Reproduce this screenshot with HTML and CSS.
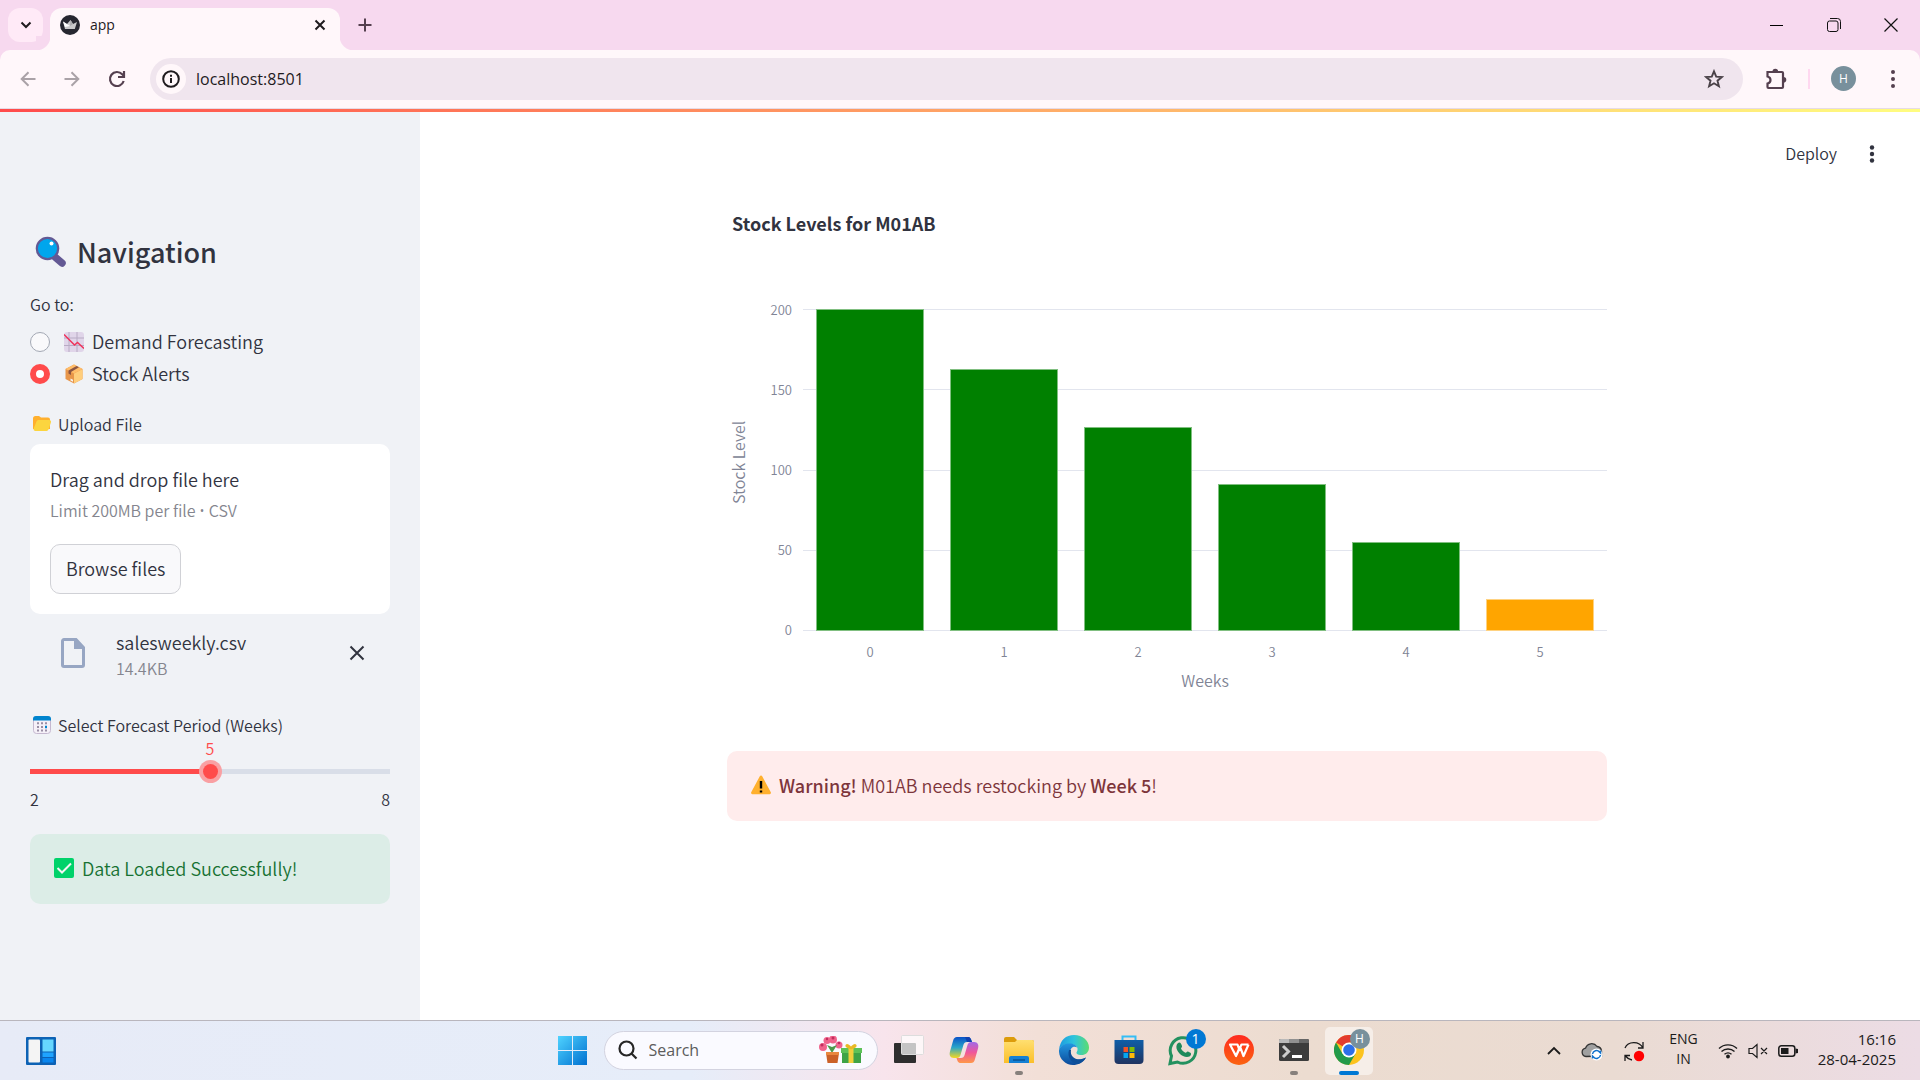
FILE: index.html
```html
<!DOCTYPE html>
<html lang="en">
<head>
<meta charset="utf-8">
<meta name="viewport" content="width=device-width, initial-scale=1">
<title>app</title>
<link rel="stylesheet" href="styles.css">
</head>
<body>
<header class="browser">
  <div class="tab-strip">
    <button class="tab-search" aria-label="Search tabs"><svg width="12" height="8" viewBox="0 0 12 8" fill="none" stroke="#1f1b1e" stroke-width="2"><path d="M1.500 1.500 6 6l4.500-4.500"/></svg></button>
    <div class="tab">
      <svg width="20" height="20" viewBox="0 0 20 20"><circle cx="10" cy="10" r="10" fill="#262730"/><path d="M3 6.500 7 9l3.500-4L13 9l4-2-2.200 7H5z" fill="#c9c9cb"/><path d="M3 6.500 10 11l-5 1z" fill="#fff"/><path d="m10.500 5 2.500 4-3 2z" fill="#a9a9ad"/></svg>
      <span class="tab-title">app</span>
      <button class="plain" aria-label="Close tab"><svg width="12" height="12" viewBox="0 0 12 12" stroke="#1f1b1e" stroke-width="2"><path d="m1.500 1.500 9 9m0-9-9 9"/></svg></button>
    </div>
    <button class="plain new-tab" aria-label="New tab"><svg width="14" height="14" viewBox="0 0 14 14" stroke="#55404f" stroke-width="2"><path d="M7 .5v13M.5 7h13"/></svg></button>
    <div class="window-controls">
      <button class="plain" aria-label="Minimize"><svg width="14" height="14" viewBox="0 0 14 14" stroke="#000"><path d="M0 7.500h13"/></svg></button>
      <button class="plain" aria-label="Restore"><svg width="14" height="14" viewBox="0 0 14 14" fill="none" stroke="#111"><rect x=".5" y="3" width="10.500" height="10.500" rx="2"/><path d="M3 .5h7.500a3 3 0 0 1 3 3V11"/></svg></button>
      <button class="plain" aria-label="Close"><svg width="14" height="14" viewBox="0 0 14 14" stroke="#111" stroke-width="1.200"><path d="m.5.5 13 13m0-13-13 13"/></svg></button>
    </div>
  </div>
  <div class="toolbar">
    <div class="nav-buttons">
      <button class="plain" aria-label="Back"><svg width="16" height="16" viewBox="0 0 16 16" fill="none" stroke="#aaa2a7" stroke-width="2"><path d="M15.500 8H2m6.500-6.800L1.700 8l6.800 6.800"/></svg></button>
      <button class="plain" aria-label="Forward"><svg width="16" height="16" viewBox="0 0 16 16" fill="none" stroke="#aaa2a7" stroke-width="2"><path d="M.5 8H14M7.500 1.200 14.300 8l-6.800 6.800"/></svg></button>
      <button class="plain" aria-label="Reload"><svg width="18" height="18" viewBox="0 0 18 18" fill="none" stroke="#55404f" stroke-width="2.200"><path d="M15.700 11A7 7 0 1 1 14.200 4.300L16 6"/><path d="M16 1v6h-6"/></svg></button>
    </div>
    <div class="address">
      <button class="site-info" aria-label="Site information"><svg width="18" height="18" viewBox="0 0 18 18"><circle cx="9" cy="9" r="7.800" fill="none" stroke="#1f1b1e" stroke-width="2"/><path d="M8 8h2v5H8zM8 4.800h2v2H8z" fill="#1f1b1e"/></svg></button>
      <input class="url" type="text" value="localhost:8501" aria-label="Address">
      <button class="plain" aria-label="Bookmark"><svg width="20" height="20" viewBox="0 0 20 20" fill="none" stroke="#4a4248" stroke-width="1.900"><path d="m10 2.300 2.200 5.300 5.700.4-4.400 3.700 1.400 5.600-4.900-3-4.900 3 1.400-5.600L2.100 8l5.700-.4z"/></svg></button>
    </div>
    <div class="toolbar-end">
      <button class="plain" aria-label="Extensions"><svg width="22" height="22" viewBox="0 0 22 22" fill="none" stroke="#55404f" stroke-width="2.200"><path d="M2.500 4H17a1 1 0 0 1 1 1v14a1 1 0 0 1-1 1H3.500a1 1 0 0 1-1-1v-3.500c4-1 4-6 0-7z"/><path d="M7.500 3.500a2.800 2.800 0 0 1 5.600 0M18.500 9a2.800 2.800 0 0 1 0 5.600" fill="#55404f" stroke="none"/></svg></button>
      <span class="divider"></span>
      <button class="avatar" aria-label="Profile">H</button>
      <button class="plain" aria-label="Menu"><svg width="6" height="20" viewBox="0 0 6 20" fill="#55404f"><circle cx="3" cy="3" r="2"/><circle cx="3" cy="10" r="2"/><circle cx="3" cy="17" r="2"/></svg></button>
    </div>
  </div>
</header>

<div class="app">
  <aside class="sidebar">
    <h2 class="heading"><svg width="32" height="32" viewBox="0 0 32 32"><path d="m21 21 7 6" stroke="#635994" stroke-width="7.500" stroke-linecap="round"/><circle cx="13.500" cy="12.500" r="10.700" fill="#00a6ed" stroke="#635994" stroke-width="2.200"/><circle cx="17.500" cy="7.500" r="2" fill="#fff"/></svg>Navigation</h2>
    <fieldset class="radios">
      <legend class="label">Go to:</legend>
      <label class="radio"><input type="radio" name="page"><svg width="20" height="20" viewBox="0 0 20 20"><rect width="20" height="20" rx="3" fill="#e0d5e9"/><path d="M5 0v20M13 0v20M0 6h20M0 13.500h20" stroke="#b8abc4"/><path d="m0 2.500 10.500 10.500 3-2.500L20 16.500" fill="none" stroke="#f0325a" stroke-width="1.500"/></svg><span class="option">Demand Forecasting</span></label>
      <label class="radio"><input type="radio" name="page" checked><svg width="20" height="20" viewBox="0 0 20 20"><path d="m10 .5 8.500 4.500v10L10 19.500 1.500 15V5z" fill="#e8964a"/><path d="m10 9.500 8.500-4.500v10L10 19.500z" fill="#ffce7c"/><path d="m10 .5 8.500 4.500L10 9.500 1.500 5z" fill="#ffbd69"/><path d="M4.500 6.600 12.500 2l2.500 1.300-8 4.600v3L4.500 9.600z" fill="#8c5543"/><path d="m6.500 14.500 2.500 1.200v2l-2.500-1.200z" fill="#f4f4f4"/></svg><span class="option">Stock Alerts</span></label>
    </fieldset>
    <div class="label upload-label"><svg width="24" height="18" viewBox="0 0 24 18"><path d="M3 3.500A2.500 2.500 0 0 1 5.500 1H9l2 1.500h7a2 2 0 0 1 2 2V14H3z" fill="#ffb02e"/><path d="M6.500 6.500A2 2 0 0 1 8.500 5H19a2 2 0 0 1 1.900 2.500l-2.400 7a2 2 0 0 1-1.900 1.500H5a2 2 0 0 1-1.500-2z" fill="#fcd53f"/></svg>Upload File</div>
    <section class="dropzone">
      <div class="drop-title">Drag and drop file here</div>
      <div class="drop-hint">Limit 200MB per file <span class="bullet">•</span> CSV</div>
      <button class="browse">Browse files</button>
    </section>
    <div class="file">
      <svg class="file-icon" width="24" height="30" viewBox="0 0 24 30"><path d="M3 1.500h12l7.500 8V27a1.500 1.500 0 0 1-1.500 1.500H3A1.500 1.500 0 0 1 1.500 27V3A1.500 1.500 0 0 1 3 1.500z" fill="none" stroke="#97a6c3" stroke-width="3"/><path d="M13 1h2.500l7.500 8v2H13z" fill="#97a6c3"/></svg>
      <div class="file-text">
        <div>salesweekly.csv</div>
        <div class="file-size">14.4KB</div>
      </div>
      <button class="plain remove" aria-label="Remove file"><svg width="16" height="16" viewBox="0 0 16 16" stroke="#31333f" stroke-width="2"><path d="m1.500 1.500 13 13m0-13-13 13"/></svg></button>
    </div>
    <label class="label slider-label" for="weeks"><svg width="24" height="20" viewBox="0 0 24 20"><rect x="3.500" y="1.500" width="17" height="17" rx="3" fill="#f5f0f8" stroke="#c5b8cf"/><path d="M3 5.500V4a3 3 0 0 1 3-3h12a3 3 0 0 1 3 3v1.500z" fill="#0084ce"/><path d="M7 8.200h2M7 12h2M7 15.500h2m2-7.300h2M11 12h2m-2 3.500h2m2-7.300h2m-2 7.300h2" stroke="#998ea4" stroke-width="2"/><path d="M15 12h2" stroke="#0084ce" stroke-width="2.500"/></svg>Select Forecast Period (Weeks)</label>
    <output class="slider-value" for="weeks">5</output>
    <input class="slider" id="weeks" type="range" min="2" max="8" value="5">
    <div class="slider-range"><span>2</span><span>8</span></div>
    <div class="alert success"><svg width="24" height="22" viewBox="0 0 24 22"><rect x="2" y="1" width="20" height="20" rx="2" fill="#00d26a"/><path d="m5.500 11 4.500 4.500 9-9" fill="none" stroke="#f4f4f4" stroke-width="2"/></svg><span>Data Loaded Successfully!</span></div>
  </aside>

  <main class="main">
    <div class="app-header">
      <button class="plain deploy">Deploy</button>
      <button class="plain" aria-label="App menu"><svg width="6" height="18" viewBox="0 0 6 18" fill="#31333f"><circle cx="3" cy="2.500" r="2.200"/><circle cx="3" cy="9" r="2.200"/><circle cx="3" cy="15.500" r="2.200"/></svg></button>
    </div>
    <div class="block">
      <figure class="chart">
        <figcaption class="chart-title">Stock Levels for M01AB</figcaption>
        <div class="y-title">Stock Level</div>
        <div class="y-ticks"><span>200</span><span>150</span><span>100</span><span>50</span><span>0</span></div>
        <div class="grid-lines"><i></i><i></i><i></i><i></i><i></i></div>
        <div class="bars">
          <div class="bar" style="height:100%"></div>
          <div class="bar" style="height:81.500%"></div>
          <div class="bar" style="height:63.500%"></div>
          <div class="bar" style="height:45.600%"></div>
          <div class="bar" style="height:27.700%"></div>
          <div class="bar low" style="height:10%"></div>
        </div>
        <div class="x-ticks"><span>0</span><span>1</span><span>2</span><span>3</span><span>4</span><span>5</span></div>
        <div class="x-title">Weeks</div>
      </figure>
      <div class="alert warning"><svg width="24" height="22" viewBox="0 0 24 22"><path d="M10.800 2.200a1.300 1.300 0 0 1 2.400 0l8.600 16a1.400 1.400 0 0 1-1.200 2H3.400a1.400 1.400 0 0 1-1.200-2z" fill="#ffb02e"/><path d="M12 7v7.500M12 16.500v2" stroke="#000" stroke-width="2.400"/></svg><span><strong>Warning!</strong> M01AB needs restocking by <strong>Week 5</strong>!</span></div>
    </div>
  </main>
</div>

<footer class="taskbar">
  <svg width="0" height="0" class="defs"><defs>
    <linearGradient id="win" x2="1" y2="1"><stop stop-color="#4fd3ff"/><stop offset="1" stop-color="#0070d0"/></linearGradient>
    <linearGradient id="cop1" y2="1" x2="0"><stop stop-color="#0a52c8"/><stop offset=".5" stop-color="#2aa5c8"/><stop offset="1" stop-color="#f5d820"/></linearGradient>
    <linearGradient id="cop2" y2="1" x2="0"><stop stop-color="#a06ae8"/><stop offset=".5" stop-color="#f0569a"/><stop offset="1" stop-color="#ff9848"/></linearGradient>
    <linearGradient id="fold" y2="1" x2="0"><stop stop-color="#ffdf70"/><stop offset="1" stop-color="#fbbf2a"/></linearGradient>
    <linearGradient id="edge1"><stop stop-color="#1c9be0"/><stop offset=".5" stop-color="#2fc4dc"/><stop offset="1" stop-color="#5cdc70"/></linearGradient>
    <linearGradient id="edge2" y2="1" x2="0"><stop stop-color="#2296e0"/><stop offset="1" stop-color="#0c4a9a"/></linearGradient>
    <linearGradient id="store" y2="1" x2="0"><stop stop-color="#0f5ea8"/><stop offset="1" stop-color="#203460"/></linearGradient>
    <linearGradient id="wps" y2="1" x2="0"><stop stop-color="#ff2a20"/><stop offset="1" stop-color="#fb6410"/></linearGradient>
  </defs></svg>
  <button class="plain widgets" aria-label="Widgets"><svg width="30" height="28" viewBox="0 0 30 28"><rect width="30" height="28" rx="1" fill="#0d62b5"/><rect x="2.500" y="2.500" width="11.500" height="23" rx="1" fill="#f4f4f4"/><rect x="16.500" y="2.500" width="11" height="12" fill="#66d7ff"/><rect x="16.500" y="15.500" width="11" height="4.500" fill="#1fa4ff"/><rect x="16.500" y="21" width="11" height="4.500" fill="#0a86ee"/></svg></button>
  <div class="task-center">
    <button class="task start" aria-label="Start"><svg width="29" height="29" viewBox="0 0 29 29"><path d="M0 0h14v14H0zM15 0h14v14H15zM0 15h14v14H0zM15 15h14v14H15z" fill="url(#win)"/></svg></button>
    <div class="search">
      <svg width="20" height="20" viewBox="0 0 20 20" fill="none" stroke="#262626" stroke-width="2.200"><circle cx="8.500" cy="8.500" r="7"/><path d="m13.500 13.500 5 5"/></svg>
      <input class="search-input" type="text" placeholder="Search" aria-label="Search">
      <svg width="44" height="28" viewBox="0 0 44 28"><g fill="#f0648c"><circle cx="4" cy="11" r="4"/><circle cx="8" cy="4.500" r="3.500"/><circle cx="14" cy="3.500" r="4"/><circle cx="20" cy="9" r="3.500"/></g><g fill="#c22d5e"><circle cx="3" cy="9" r="1.500"/><circle cx="8" cy="3" r="1.200"/><circle cx="14" cy="2" r="1.500"/><circle cx="20" cy="7" r="1.300"/></g><path d="M8 9l5 8 5-8-5 2z" fill="#4d9a4b"/><path d="M7 17h13l-1.500 10h-10z" fill="#cb6128"/><path d="M7 16h13v3H7z" fill="#e8873f"/><path d="M23 14h19v13H23z" fill="#3ea346"/><path d="M22 12h21v5H22z" fill="#5dc157"/><path d="M29.500 12h5v15h-5z" fill="#f0cf3c"/><path d="M32 12c-8-1-4-6 0 0 4-6 8-1 0 0" fill="none" stroke="#e9b824" stroke-width="2"/></svg>
    </div>
    <button class="task" aria-label="Task View"><svg width="30" height="30" viewBox="0 0 30 30"><rect y="8" width="22" height="20" rx="1" fill="#2e2e2e"/><rect x="7.500" y=".5" width="22" height="19" rx="1" fill="#fff" fill-opacity=".72" stroke="#ddd"/></svg></button>
    <button class="task" aria-label="Copilot"><svg width="30" height="30" viewBox="0 0 30 30"><path d="M8 2h10.500c3 0 3.500 2 4.500 5h-5c-2 0-3 1-3.600 3l-2.600 9c-.8 3-2 4-4 4H5c-4 0-5-3-4-6.500L4 6c.8-3 2-4 4-4z" fill="url(#cop1)"/><path d="M22 28H12c-3 0-3.500-2-4.500-5H12c2 0 3-1 3.600-3l2.600-9c.8-3 2-4 4-4H25c4 0 5 3 4 6.500L26 24c-.8 3-2 4-4 4z" fill="url(#cop2)"/><path d="M18.500 2c3 0 3.500 2 4.500 5h-5l-2-5z" fill="#1242b0"/></svg></button>
    <button class="task running" aria-label="File Explorer"><svg width="30" height="30" viewBox="0 0 30 30"><path d="M0 8V4a2 2 0 0 1 2-2h8l3 3h15a2 2 0 0 1 2 2v3z" fill="#dc9c0c"/><path d="M0 7h11l2-2h15a2 2 0 0 1 2 2v21H0z" fill="url(#fold)"/><path d="M5 28v-5a2 2 0 0 1 2-2h16a2 2 0 0 1 2 2v5z" fill="#1580d4"/><path d="M9 25h12" stroke="#0a5394" stroke-width="1.500"/></svg></button>
    <button class="task" aria-label="Edge"><svg width="30" height="30" viewBox="0 0 30 30"><path d="M0 15C1 5 7 0 15 0c9 0 15 6 15 12.500 0 5-3.500 7.500-7.500 7.500-4 0-6-1.500-4.500-3.500C20 13 17 9 11 9 6 9 2 11 0 15z" fill="url(#edge1)"/><path d="M0 15C2 10 6 8.500 10.500 8.500c4 0 7 2 7.500 4-1-.8-2.500-1.200-4-.5-3 1.500-4 6-1 10 3 3.700 9 3.500 14 .5-3 5-8 7.500-13 7.500C6 30-.5 23 0 15z" fill="url(#edge2)"/><path d="M10 15c-2 7 2 13 9 14 4-1 6.500-3.500 8-6.500-5 2.500-10 2.500-13-.5-2-2-2.500-4.500-2-7z" fill="#0d4e98"/></svg></button>
    <button class="task" aria-label="Microsoft Store"><svg width="30" height="30" viewBox="0 0 30 30"><path d="M8.500 7V1.500h13V7" fill="none" stroke="#35bdf5" stroke-width="2"/><path d="M.5 5h29v20a4 4 0 0 1-4 4h-21a4 4 0 0 1-4-4z" fill="url(#store)"/><path d="M9.500 12H14v5H9.500z" fill="#f35325"/><path d="M15.500 12h5v5h-5z" fill="#81bc06"/><path d="M9.500 18H14v5H9.500z" fill="#05a6f0"/><path d="M15.500 18h5v5h-5z" fill="#ffba08"/></svg></button>
    <button class="task" aria-label="WhatsApp, 1 notification"><svg width="32" height="32" viewBox="0 0 32 32"><path d="M3.500 22A12.800 12.800 0 1 1 9.500 28L2 29.500z" fill="none" stroke="#23915f" stroke-width="3"/><path d="M10 9c2-1.500 3 0 4 3 .3 1-1 2-1 2.500 1 2 2.500 3.500 4.500 4.300.6.200 1.500-1.800 2.500-1.300 2 1 3.500 1.500 3 3-1 3-5 3-8 1.500C10 19.500 6 13 10 9z" fill="#1f8a5b"/></svg><span class="badge count">1</span></button>
    <button class="task" aria-label="WPS Office"><svg width="30" height="30" viewBox="0 0 30 30"><circle cx="15" cy="15" r="15" fill="url(#wps)"/><path d="M6 9.500h7.500L15 14l-3 7zM24.500 9.500h-7L12 21M24.500 9.500 19.500 21l-3-8" fill="none" stroke="#fff" stroke-width="2.200" stroke-linejoin="round"/></svg></button>
    <button class="task running" aria-label="Terminal"><svg width="30" height="30" viewBox="0 0 30 30"><rect y="4" width="30" height="22" rx="1.500" fill="#3c3c3c"/><path d="M0 8V5.500A1.500 1.500 0 0 1 1.500 4H10v4z" fill="#b9b9b9"/><path d="M10 4h10v4H10z" fill="#909090"/><path d="M20 4h8.500A1.500 1.500 0 0 1 30 5.500V8H20z" fill="#666"/><path d="m4 11 5.500 5.500L4 22" fill="none" stroke="#ccc" stroke-width="3"/><path d="M13 21.500h10" stroke="#fff" stroke-width="3"/></svg></button>
    <button class="task active" aria-label="Chrome"><svg width="30" height="30" viewBox="0 0 30 30"><circle cx="15" cy="15" r="15" fill="#fcc31e"/><path d="M15 15 2 7.500A15 15 0 0 1 28 7.500H15z" fill="#e33b2e"/><path d="M2 7.500A15 15 0 0 0 15 30l6.500-11.300L15 15 8.500 18.700z" fill="#229a4a"/><circle cx="15" cy="15" r="7.500" fill="#fff"/><circle cx="15" cy="15" r="5.800" fill="#2d6fe8"/></svg><span class="badge profile">H</span></button>
  </div>
  <div class="tray">
    <button class="plain" aria-label="Show hidden icons"><svg width="14" height="9" viewBox="0 0 14 9" fill="none" stroke="#1b1b1b" stroke-width="1.800"><path d="m1 8 6-6 6 6"/></svg></button>
    <button class="plain" aria-label="OneDrive"><svg width="22" height="20" viewBox="0 0 22 20"><path d="M5 15.500a4.200 4.200 0 0 1-.5-8.300A6.500 6.500 0 0 1 16 5.500a5 5 0 0 1 4.500 4.500v5z" fill="#a0a0a0" stroke="#333" stroke-width="1.300"/><circle cx="15.500" cy="13.500" r="6" fill="#fff"/><path d="M11.500 13a4 4 0 0 1 7-2l1 1V9.500M19.500 14a4 4 0 0 1-7 2l-1-1v2.500" fill="none" stroke="#1172cc" stroke-width="1.500"/></svg></button>
    <button class="plain" aria-label="Update"><svg width="22" height="22" viewBox="0 0 22 22" fill="none" stroke="#1b1b1b" stroke-width="1.300"><path d="M2 8C5 1 16 .5 20 8M20 2v6h-5M9 20c-3-.5-5-2-6.500-4M2 21v-5.500h5"/><circle cx="16" cy="16" r="5.200" fill="#f00" stroke="none"/></svg></button>
    <button class="plain lang">ENG<br>IN</button>
    <button class="plain status" aria-label="Network, volume and battery">
      <svg width="20" height="16" viewBox="0 0 20 16" fill="none" stroke="#1b1b1b" stroke-width="1.400"><path d="M1 5.500a13 13 0 0 1 18 0M3.500 8.500a9.500 9.500 0 0 1 13 0M6.500 11.300a5.500 5.500 0 0 1 7 0"/><circle cx="10" cy="13.500" r="1.200" fill="#1b1b1b"/></svg>
      <svg width="20" height="16" viewBox="0 0 20 16" fill="none" stroke="#1b1b1b" stroke-width="1.200"><path d="M1 5.500h3.500L9 1.500v13l-4.500-4H1zM13 5l6 6m0-6-6 6"/></svg>
      <svg width="20" height="14" viewBox="0 0 20 14"><rect x=".8" y="1.800" width="16" height="10.500" rx="2.500" fill="none" stroke="#1b1b1b" stroke-width="1.500"/><path d="M3 4h7.500v6H3zM17.500 4.500 20 5v4l-2.500.5z" fill="#1b1b1b"/></svg>
    </button>
    <button class="plain clock">16:16<br>28-04-2025</button>
  </div>
</footer>
</body>
</html>
```

FILE: styles.css
```css
* {
  box-sizing: border-box;
}

body {
  margin: 0;
  min-height: 100vh;
  display: flex;
  flex-direction: column;
  background: #fff;
  color: #31333f;
  font: 350 18px/26px "Noto Sans CJK SC", "Open Sans", sans-serif;
}

button,
input {
  font: inherit;
  color: inherit;
}

svg {
  display: block;
  flex: none;
}

.plain {
  display: flex;
  align-items: center;
  justify-content: center;
  padding: 0;
  border: 0;
  background: none;
}

/* Browser frame */

.browser,
.taskbar {
  font-family: "Open Sans", "Noto Sans", sans-serif;
  font-weight: 400;
}

.browser {
  background: #f7d9ef;
}

.tab-strip {
  display: flex;
  height: 50px;
  padding: 8px 22px 0 8px;
}

.tab-search {
  display: flex;
  align-items: center;
  justify-content: center;
  width: 35px;
  height: 34px;
  padding: 0;
  border: 0;
  border-radius: 12px;
  background: #ffeaf7;
}

.tab {
  position: relative;
  display: flex;
  align-items: center;
  gap: 10px;
  width: 290px;
  margin-left: 7px;
  padding: 0 14px 8px 10px;
  border-radius: 12px 12px 0 0;
  background: #fff7fa;
}

.tab::before,
.tab::after {
  content: "";
  position: absolute;
  bottom: 0;
  width: 14px;
  height: 14px;
}

.tab::before {
  right: 100%;
  background: radial-gradient(circle at 0 0, #f7d9ef 14px, #fff7fa 15px);
}

.tab::after {
  left: 100%;
  background: radial-gradient(circle at 100% 0, #f7d9ef 14px, #fff7fa 15px);
}

.tab-title {
  flex: 1;
  color: #1f1b1e;
  font-size: 14px;
}

.new-tab {
  height: 34px;
  margin-left: 18px;
}

.window-controls {
  display: flex;
  align-items: center;
  gap: 43px;
  margin-left: auto;
  padding-bottom: 9px;
}

.toolbar {
  display: flex;
  align-items: center;
  gap: 22px;
  height: 59px;
  padding: 0 24px 1px 20px;
  border-bottom: 1px solid #e6dbe6;
  border-radius: 10px 10px 0 0;
  background: #fff7fa;
}

.nav-buttons {
  display: flex;
  align-items: center;
  gap: 28px;
  margin-right: 2px;
}

.address {
  display: flex;
  flex: 1;
  align-items: center;
  gap: 10px;
  height: 42px;
  padding: 0 19px 0 6px;
  border-radius: 21px;
  background: #f0e5ee;
}

.site-info {
  display: flex;
  align-items: center;
  justify-content: center;
  width: 30px;
  height: 30px;
  padding: 0;
  border: 0;
  border-radius: 50%;
  background: #fff7fa;
}

.url {
  flex: 1;
  min-width: 0;
  padding: 0;
  border: 0;
  outline: 0;
  background: none;
  color: #1f1b1e;
  font-size: 16px;
}

.toolbar-end {
  display: flex;
  align-items: center;
  gap: 21px;
}

.divider {
  width: 2px;
  height: 20px;
  background: #ffd8f0;
}

.avatar {
  width: 25px;
  height: 25px;
  margin-right: 13px;
  padding: 0;
  border: 0;
  border-radius: 50%;
  background: #78909c;
  color: #fff;
  font-size: 12px;
  line-height: 25px;
}

/* Application */

.app {
  display: flex;
  flex: 1;
  border-top: 3px solid;
  border-image: linear-gradient(90deg, #ff4b4b, #fffd80) 1;
}

.sidebar {
  width: 420px;
  padding: 122px 30px 40px;
  background: #f0f2f6;
}

.heading {
  display: flex;
  align-items: center;
  gap: 11px;
  margin: 0 0 21px;
  padding-left: 4px;
  font-size: 27px;
  line-height: 36px;
  font-weight: 500;
}

.label {
  display: flex;
  align-items: center;
  gap: 4px;
  padding: 0;
  font-size: 16px;
}

.radios {
  margin: 0 0 21px;
  padding: 0;
  border: 0;
}

.radios .label {
  margin-bottom: 9px;
}

.radio {
  display: flex;
  align-items: center;
  height: 32px;
}

.radio svg {
  margin: 0 8px 0 14px;
}

.option {
  padding-bottom: 2px;
}

.radio input {
  appearance: none;
  width: 20px;
  height: 20px;
  margin: 0;
  border: 1px solid #a3a8b4;
  border-radius: 50%;
  background: #f9f9fb;
}

.radio input:checked {
  border: 6px solid #ff4b4b;
  background: #fff;
}

.dropzone {
  margin-top: 7px;
  padding: 20px;
  border-radius: 10px;
  background: #fff;
}

.drop-title {
  line-height: 30px;
}

.drop-hint {
  margin-bottom: 17px;
  color: #84858e;
  font-size: 16px;
  line-height: 32px;
}

.bullet {
  font-family: "Open Sans", sans-serif;
}

.browse {
  display: block;
  height: 50px;
  padding: 0 15px 2px;
  border: 1px solid #d0d1d6;
  border-radius: 10px;
  background: #f9f9fb;
}

.file {
  display: flex;
  align-items: center;
  margin-bottom: 31px;
  padding: 15px 25px 0 31px;
}

.file-icon {
  margin-bottom: 4px;
}

.file-text {
  flex: 1;
  margin-left: 31px;
}

.file-size {
  color: #84858e;
  font-size: 16px;
}

.remove {
  padding-bottom: 4px;
}

.slider-value {
  display: block;
  color: #ff4b4b;
  font-size: 16px;
  line-height: 20px;
  text-align: center;
}

.slider {
  appearance: none;
  display: block;
  width: 100%;
  height: 26px;
  margin: 0;
  background: linear-gradient(90deg, #ff4b4b 50%, #d9dee8 50%) center / 100% 5px no-repeat;
}

.slider::-webkit-slider-thumb {
  appearance: none;
  width: 15px;
  height: 15px;
  border-radius: 50%;
  background: #ff4b4b;
  box-shadow: 0 0 0 4px #f9a0a3;
}

.slider-range {
  display: flex;
  justify-content: space-between;
  margin-bottom: 20px;
  font-size: 16px;
  line-height: 30px;
}

.alert {
  display: flex;
  align-items: center;
  gap: 6px;
  height: 70px;
  padding: 0 22px 2px;
  border-radius: 10px;
}

.success {
  background: #dcede7;
  color: #177233;
}

.warning {
  background: #ffecec;
  color: #7d353b;
}

.warning strong {
  font-weight: 500;
}

.main {
  flex: 1;
  padding-right: 6px;
}

.app-header {
  display: flex;
  align-items: center;
  justify-content: flex-end;
  gap: 32px;
  height: 84px;
  padding-right: 39px;
}

.deploy {
  padding-bottom: 2px;
  font-size: 16px;
}

.block {
  max-width: 880px;
  margin: 0 auto;
}

/* Chart */

.chart {
  display: grid;
  grid-template-columns: 20px 46px 1fr;
  grid-template-rows: 113px 322px 41px 16px;
  column-gap: 5px;
  margin: 0 0 63px;
  color: #808495;
}

.chart-title {
  grid-column: 1 / -1;
  padding: 14px 0 0 5px;
  color: #31333f;
  font-size: 18px;
  font-weight: 700;
}

.y-title {
  grid-area: 2 / 1;
  justify-self: end;
  margin-bottom: 16px;
  writing-mode: vertical-rl;
  transform: rotate(180deg);
  font-size: 16px;
  line-height: 18px;
  text-align: center;
}

.y-ticks {
  grid-area: 2 / 2;
  display: flex;
  flex-direction: column;
  justify-content: space-between;
  margin: -9px 6px -9px 0;
  font-size: 13px;
  line-height: 20px;
  text-align: right;
}

.grid-lines {
  grid-area: 2 / 3;
  display: flex;
  flex-direction: column;
  justify-content: space-between;
}

.grid-lines i {
  height: 1px;
  background: #e2e5ee;
}

.bars {
  grid-area: 2 / 3;
  display: flex;
  align-items: flex-end;
  justify-content: space-around;
}

.bar {
  width: 13.333%;
  border: 1px solid #80bf80;
  background: #008000;
}

.low {
  border-color: #ffd280;
  background: #ffa500;
}

.x-ticks {
  grid-area: 3 / 3;
  display: flex;
  justify-content: space-around;
  padding-top: 11px;
  font-size: 13px;
  line-height: 20px;
}

.x-ticks span {
  flex: 1;
  text-align: center;
}

.x-title {
  grid-area: 4 / 3;
  font-size: 16px;
  line-height: 16px;
  text-align: center;
}

/* Taskbar */

.taskbar {
  display: grid;
  grid-template-columns: 1fr auto 1fr;
  align-items: center;
  height: 60px;
  border-top: 1px solid #b9b6bd;
  background: linear-gradient(90deg, #e7ebf7 0%, #e6edf9 36%, #f8e4ec 46%, #f2dfd7 54%, #ecdcd0 68%, #eadbd2 84%, #ecdce5 100%);
  color: #1b1b1b;
  font-size: 15px;
  line-height: 20px;
}

.defs {
  position: absolute;
}

.widgets {
  width: 30px;
  margin-left: 26px;
}

.task-center {
  display: flex;
  align-items: center;
}

.task {
  position: relative;
  display: flex;
  align-items: center;
  justify-content: center;
  width: 55px;
  height: 48px;
  padding: 0 0 1px;
  border: 0;
  background: none;
}

.start {
  margin-right: 4px;
}

.search {
  display: flex;
  align-items: center;
  gap: 11px;
  width: 274px;
  height: 39px;
  margin-right: 4px;
  padding: 0 14px 1px 13px;
  border: 1px solid #d3d3e0;
  border-radius: 20px;
  background: #fafaff;
}

.search-input {
  flex: 1;
  min-width: 0;
  padding: 0;
  border: 0;
  outline: 0;
  background: none;
  font-size: 16px;
}

.search-input::placeholder {
  color: #5c5c5c;
}

.running::after,
.active::after {
  content: "";
  position: absolute;
  bottom: 0;
  left: 50%;
  width: 8px;
  height: 4px;
  border-radius: 2px;
  background: #87807c;
  transform: translateX(-50%);
}

.active::after {
  width: 20px;
  background: #0078d4;
}

.active {
  width: 48px;
  margin: 0 3px;
  border-radius: 5px;
  background: #f6eee8;
}

.badge {
  position: absolute;
  width: 20px;
  height: 20px;
  border-radius: 50%;
  color: #fff;
  font-size: 14px;
  line-height: 20px;
  text-align: center;
}

.count {
  top: 2px;
  right: 6px;
  background: #0078d4;
}

.profile {
  top: 2px;
  right: 3px;
  background: #78909c;
  font-size: 12px;
}

.tray {
  display: flex;
  align-items: center;
  justify-content: flex-end;
  gap: 20px;
  padding-right: 24px;
}

.lang,
.clock {
  display: block;
  padding-bottom: 3px;
  line-height: 20px;
}

.lang {
  margin-left: 4px;
  font-size: 14px;
}

.status {
  gap: 10px;
}

.clock {
  text-align: right;
}
```
